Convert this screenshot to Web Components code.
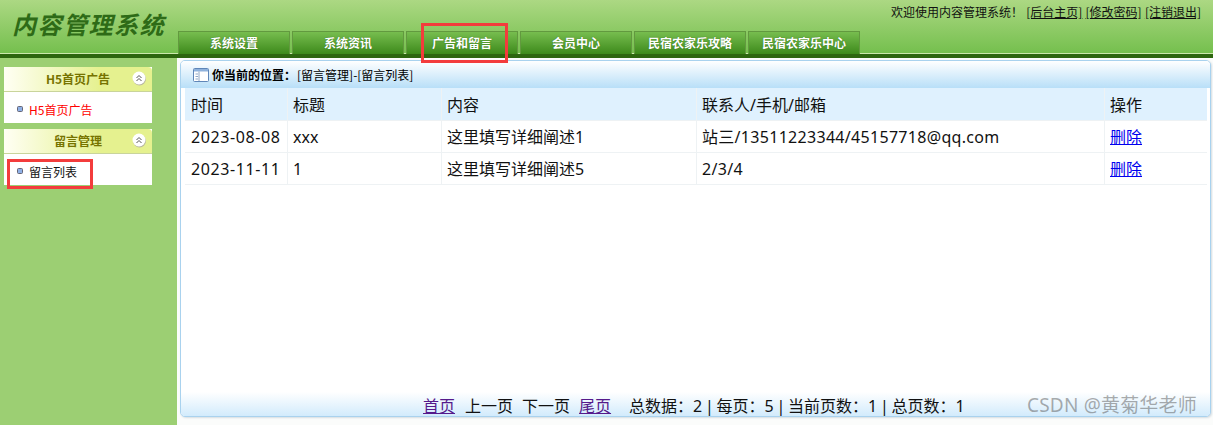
<!DOCTYPE html>
<html lang="zh">
<head>
<meta charset="utf-8">
<title>内容管理系统</title>
<style>
    html, body { margin: 0; padding: 0; }
    body {
        width: 1213px;
        height: 425px;
        overflow: hidden;
        background: #fbfcfb;
        font-family: "Noto Sans", "Noto Sans CJK SC", sans-serif;
        color: #000;
        display: flex;
        flex-direction: column;
    }
    .page { display: flex; flex: 1; min-height: 0; }
    .mark { position: absolute; border: 3px solid #f33c3c; box-sizing: border-box; pointer-events: none; }
    .mark.tab { left: 421px; top: 23px; width: 87px; height: 40px; }
    .mark.side { left: 7px; top: 159px; width: 86px; height: 30px; }
</style>
</head>
<body>
<app-header>
    <span slot="title">内容管理系统</span>
    <span slot="links">欢迎使用内容管理系统！ <u>[后台主页]</u> <u>[修改密码]</u> <u>[注销退出]</u></span>
    <nav-tab>系统设置</nav-tab>
    <nav-tab>系统资讯</nav-tab>
    <nav-tab>广告和留言</nav-tab>
    <nav-tab>会员中心</nav-tab>
    <nav-tab>民宿农家乐攻略</nav-tab>
    <nav-tab>民宿农家乐中心</nav-tab>
</app-header>
<div class="page">
    <side-menu>
        <side-card heading="H5首页广告"><side-link active>H5首页广告</side-link></side-card>
        <side-card heading="留言管理"><side-link>留言列表</side-link></side-card>
    </side-menu>
    <main-panel crumb="[留言管理]-[留言列表]">
        <message-table></message-table>
        <page-bar slot="footer"></page-bar>
    </main-panel>
</div>
<div class="mark tab"></div>
<div class="mark side"></div>
<script>
class AppHeader extends HTMLElement {
    constructor() {
        super();
        this.attachShadow({ mode: "open" });
        this.shadowRoot.innerHTML = `
            <style>
                :host {
                    display: flex;
                    flex: none;
                    height: 58px;
                    box-sizing: border-box;
                    border-bottom: 4px solid #2d660f;
                    background: linear-gradient(#acd883, #74bf4d);
                    box-shadow: inset 0 -1px 0 #cbe8ac;
                }
                .title {
                    width: 178px;
                    box-sizing: border-box;
                    padding: 8px 0 0 12px;
                    font: italic bold 24px/32px "Noto Sans CJK SC", sans-serif;
                    letter-spacing: 1.5px;
                    color: #2e6b17;
                    white-space: nowrap;
                }
                .right { flex: 1; display: flex; flex-direction: column; justify-content: flex-end; position: relative; }
                .links {
                    position: absolute;
                    top: 3px;
                    right: 12px;
                    font: 12px/17px "Noto Sans CJK SC", sans-serif;
                    word-spacing: .5px;
                    color: #111;
                    white-space: nowrap;
                }
                .tabs { display: flex; gap: 2px; height: 23px; }
            </style>
            <div class="title"><slot name="title"></slot></div>
            <div class="right">
                <div class="links"><slot name="links"></slot></div>
                <div class="tabs"><slot></slot></div>
            </div>
        `;
    }
}

class NavTab extends HTMLElement {
    constructor() {
        super();
        this.attachShadow({ mode: "open" });
        this.shadowRoot.innerHTML = `
            <style>
                :host {
                    display: block;
                    width: 112px;
                    height: 23px;
                    box-sizing: border-box;
                    border: 1px solid #62993f;
                    border-bottom: 0;
                    background: linear-gradient(#77bd4f, #3d8a1b);
                    color: #fff;
                    font: bold 12px/22px "Noto Sans CJK SC", sans-serif;
                    text-align: center;
                    text-shadow: 0 0 1px #2d660f;
                    white-space: nowrap;
                }
            </style>
            <slot></slot>
        `;
    }
}

class SideMenu extends HTMLElement {
    constructor() {
        super();
        this.attachShadow({ mode: "open" });
        this.shadowRoot.innerHTML = `
            <style>
                :host {
                    display: flex;
                    flex: none;
                    flex-direction: column;
                    gap: 6px;
                    width: 177px;
                    box-sizing: border-box;
                    padding: 9px 25px 0 4px;
                    background: #9ccf73;
                }
            </style>
            <slot></slot>
        `;
    }
}

class SideCard extends HTMLElement {
    constructor() {
        super();
        this.attachShadow({ mode: "open" });
        this.shadowRoot.innerHTML = `
            <style>
                :host { display: block; height: 56px; background: #fff; }
                .head {
                    position: relative;
                    height: 25px;
                    box-sizing: border-box;
                    border-bottom: 1px solid #c9d49b;
                    border-radius: 4px 4px 0 0;
                    background: linear-gradient(90deg, #fffff4, #e5f18f 65%);
                    color: #767300;
                    font: bold 12px/24px "Noto Sans CJK SC", sans-serif;
                    text-align: center;
                }
                svg { position: absolute; left: 128px; top: 4px; }
                .body { height: 31px; box-sizing: border-box; padding-top: 9px; }
            </style>
            <div class="head">
                <span class="text"></span>
                <svg width="15" height="15" viewBox="0 0 15 15">
                    <circle cx="7.5" cy="8" r="6.5" fill="#b9b9a0"/>
                    <circle cx="7" cy="7" r="6.5" fill="#fff"/>
                    <path d="M4.5 7 7 4.5 9.5 7M4.5 10 7 7.5 9.5 10" fill="none" stroke="#555" stroke-width="1"/>
                </svg>
            </div>
            <div class="body"><slot></slot></div>
        `;
    }

    connectedCallback() {
        this.shadowRoot.querySelector(".text").textContent = this.getAttribute("heading");
    }
}

class SideLink extends HTMLElement {
    constructor() {
        super();
        this.attachShadow({ mode: "open" });
        this.shadowRoot.innerHTML = `
            <style>
                :host {
                    display: flex;
                    align-items: center;
                    gap: 6px;
                    padding-left: 13px;
                    font: 12px/17px "Noto Sans CJK SC", sans-serif;
                    color: #111;
                }
                :host([active]) { color: #f00; }
                i {
                    width: 4px;
                    height: 4px;
                    border: 1px solid #667;
                    border-radius: 1.5px;
                    background: #8fb0e6;
                    margin-top: -1px;
                }
            </style>
            <i></i><span><slot></slot></span>
        `;
    }
}

class MainPanel extends HTMLElement {
    constructor() {
        super();
        this.attachShadow({ mode: "open" });
        this.shadowRoot.innerHTML = `
            <style>
                :host {
                    display: flex;
                    flex-direction: column;
                    width: 1031px;
                    height: 357px;
                    margin: 2px 0 0 3px;
                    box-sizing: border-box;
                    border: 1px solid #a9d2ee;
                    border-radius: 5px;
                    background: #fff;
                    box-shadow: 1px 1px 2px #d5dde2;
                    overflow: hidden;
                }
                .crumb {
                    flex: none;
                    display: flex;
                    align-items: center;
                    height: 27px;
                    box-sizing: border-box;
                    padding-left: 12px;
                    background: linear-gradient(#fff, #b8dff8);
                    font: 12px/17px "Noto Sans CJK SC", sans-serif;
                }
                .crumb b { margin: 0 1px 0 3px; }
                .content { flex: 1; min-height: 0; padding: 0 3px 0 4px; }
                .foot {
                    flex: none;
                    height: 24px;
                    background: linear-gradient(#fff, #d2ebfc);
                }
            </style>
            <div class="crumb">
                <svg width="16" height="14" viewBox="0 0 16 14">
                    <rect x=".5" y=".5" width="15" height="13" rx="1" fill="#fff" stroke="#5f86b8"/>
                    <rect x="1" y="1" width="14" height="2.5" fill="#8fb2dc"/>
                    <path d="M6 3.5V13M2.5 6H5M2.5 8.5H5M2.5 11H5" fill="none" stroke="#8fa6c4"/>
                </svg>
                <b>你当前的位置：</b><span class="path"></span>
            </div>
            <div class="content"><slot></slot></div>
            <div class="foot"><slot name="footer"></slot></div>
        `;
    }

    connectedCallback() {
        this.shadowRoot.querySelector(".path").textContent = this.getAttribute("crumb");
    }
}

class MessageTable extends HTMLElement {
    constructor() {
        super();
        this.attachShadow({ mode: "open" });
        const rows = [
            ["2023-08-08", "xxx", "这里填写详细阐述1", "站三/13511223344/45157718@qq.com"],
            ["2023-11-11", "1", "这里填写详细阐述5", "2/3/4"],
        ];
        const body = rows.map((r) => `
            <div class="row">
                <div class="date">${r[0]}</div>
                <div>${r[1]}</div>
                <div>${r[2]}</div>
                <div class="contact">${r[3]}</div>
                <div><a href="#">删除</a></div>
            </div>`).join("");
        this.shadowRoot.innerHTML = `
            <style>
                :host {
                    display: block;
                    font: 16px/20px "Noto Sans", "Noto Sans CJK SC", sans-serif;
                    color: #111;
                }
                .row {
                    display: grid;
                    grid-template-columns: 102px 153px 254px 407px 102px;
                    column-gap: 1px;
                    height: 31px;
                    margin-bottom: 1px;
                    box-shadow: 0 1px 0 #eef2f4;
                    background: #eef2f4;
                }
                .row > div { background: #fff; padding: 6px 0 0 5px; white-space: nowrap; }
                .row > div:first-child { padding-left: 6px; }
                .row.th { height: 32px; margin-bottom: 1px; }
                .row.th > div { background: #dff1fe; padding-top: 7px; }
                .date { letter-spacing: .6px; }
                .contact { letter-spacing: .3px; }
                a { color: #00e; }
            </style>
            <div class="row th"><div>时间</div><div>标题</div><div>内容</div><div>联系人/手机/邮箱</div><div>操作</div></div>
            ${body}
        `;
    }
}

class PageBar extends HTMLElement {
    constructor() {
        super();
        this.attachShadow({ mode: "open" });
        this.shadowRoot.innerHTML = `
            <style>
                :host {
                    display: flex;
                    height: 24px;
                    padding-left: 242px;
                    font: 16px/28px "Noto Sans", "Noto Sans CJK SC", sans-serif;
                    color: #111;
                    white-space: nowrap;
                }
                a { color: #551a8b; }
                span { margin-left: 10px; }
                .next { margin-left: 9px; }
                .sum { margin-left: 18px; word-spacing: -1.4px; }
                .wm {
                    position: absolute;
                    left: 1027px;
                    top: 391px;
                    margin: 0;
                    font-size: 19px;
                    letter-spacing: .2px;
                    color: rgba(90, 90, 90, .5);
                }
            </style>
            <a href="#">首页</a><span>上一页</span><span class="next">下一页</span><span class="next"><a href="#">尾页</a></span>
            <span class="sum">总数据：2 | 每页：5 | 当前页数：1 | 总页数：1</span>
            <span class="wm">CSDN @黄菊华老师</span>
        `;
    }
}

customElements.define("app-header", AppHeader);
customElements.define("nav-tab", NavTab);
customElements.define("side-menu", SideMenu);
customElements.define("side-card", SideCard);
customElements.define("side-link", SideLink);
customElements.define("main-panel", MainPanel);
customElements.define("message-table", MessageTable);
customElements.define("page-bar", PageBar);
</script>
</body>
</html>
